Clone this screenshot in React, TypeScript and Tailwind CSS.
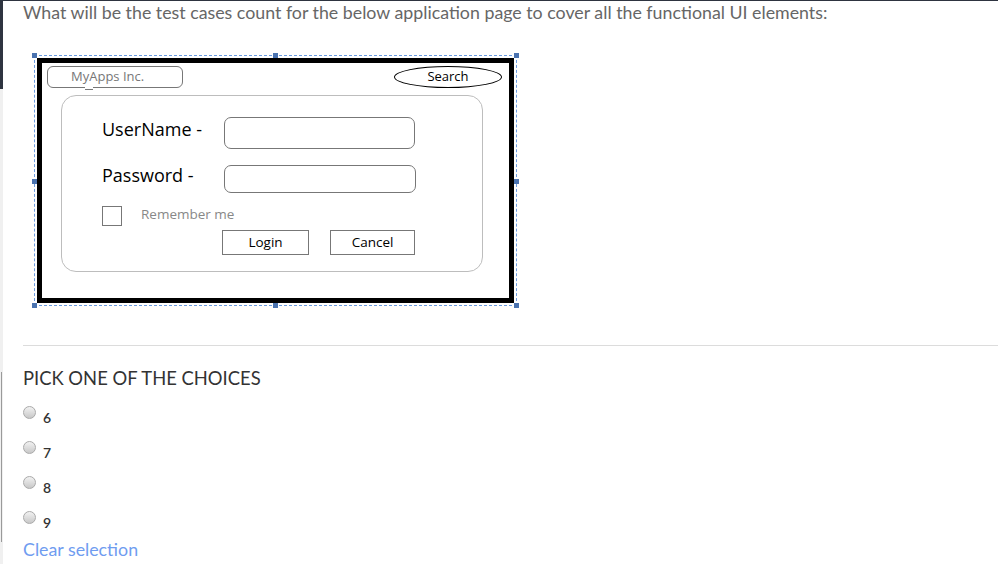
import React from 'react';

const lato = { fontFamily: 'Lato, "Open Sans", sans-serif' };
const mock = { fontFamily: '"Open Sans", "Noto Sans", sans-serif' };

function Handle({ className }: { className: string }) {
  return <span className={`absolute h-[5px] w-[5px] bg-[#4a73b0] ${className}`} />;
}

function Radio({ label }: { label: string }) {
  return (
    <label className="flex h-[35px] items-start gap-[7px]">
      <span className="mt-[-5px] h-[13px] w-[13px] rounded-full border border-[#aaa] bg-gradient-to-b from-[#f2f2f2] to-[#c8c8c8]" />
      <span className="text-[14px] font-semibold leading-[14px] text-[#333]">{label}</span>
    </label>
  );
}

function Mockup() {
  return (
    <div className="relative ml-[11px] mt-[33px] h-[251px] w-[483px] border border-dashed border-[#6a9be0] p-[2px]" style={mock}>
      <Handle className="left-[-3px] top-[-3px]" />
      <Handle className="left-[238px] top-[-3px]" />
      <Handle className="right-[-3px] top-[-3px]" />
      <Handle className="left-[-3px] top-[123px]" />
      <Handle className="right-[-3px] top-[123px]" />
      <Handle className="bottom-[-3px] left-[-3px]" />
      <Handle className="bottom-[-3px] left-[238px]" />
      <Handle className="bottom-[-3px] right-[-3px]" />

      <div className="h-full w-full border-[5px] border-black bg-white">
        <div className="mt-[3px] flex items-center justify-between pl-[5px] pr-[7px]">
          <div className="relative flex h-[22px] w-[136px] items-center rounded-[6px] border border-[#777] pl-[23px] text-[13px] text-[#777]">
            MyApps Inc.
            <span className="absolute bottom-[-3px] left-[37px] h-[5px] w-[8px] border-b border-[#777] bg-white" />
          </div>
          <div className="flex h-[22px] w-[108px] items-center justify-center rounded-[50%] border border-black text-[13px] text-black">
            Search
          </div>
        </div>

        <div className="ml-[19px] mt-[7px] h-[177px] w-[422px] rounded-[15px] border border-[#bdbdbd] pl-[40px]">
          <div className="mt-[21px] flex items-center">
            <span className="mt-[-7px] w-[122px] text-[18px] text-black">UserName -</span>
            <span className="h-[32px] w-[191px] rounded-[7px] border border-[#777]" />
          </div>
          <div className="mt-[16px] flex items-center">
            <span className="mt-[-7px] w-[122px] text-[18px] text-black">Password -</span>
            <span className="h-[28px] w-[192px] rounded-[7px] border border-[#777]" />
          </div>
          <div className="mt-[13px] flex items-center">
            <span className="h-[20px] w-[20px] border border-[#777]" />
            <span className="ml-[19px] mt-[-4px] text-[13.5px] text-[#888]">Remember me</span>
          </div>
          <div className="mt-[4px] flex gap-[21px] pl-[120px]">
            <button className="flex h-[25px] w-[87px] items-center justify-center border border-[#777] text-[13.5px] text-black">
              Login
            </button>
            <button className="flex h-[25px] w-[85px] items-center justify-center border border-[#777] text-[13.5px] text-black">
              Cancel
            </button>
          </div>
        </div>
      </div>
    </div>
  );
}

export default function App() {
  return (
    <div className="flex h-[564px] w-[998px] overflow-hidden border-t border-[#2e3440] bg-white" style={lato}>
      <div className="flex w-[3px] flex-col bg-[#f0f0f0]">
        <div className="h-[88px] bg-[#2e3440]" />
        <div className="ml-[1px] mt-[283px] h-[170px] w-[1px] bg-[#9a9a9a]" />
      </div>

      <div className="flex flex-1 flex-col pl-[20px]">
        <p className="pt-[1px] text-[17.8px] leading-[20px] text-[#666]">
          What will be the test cases count for the below application page to cover all the functional UI elements:
        </p>

        <Mockup />

        <div className="mt-[39px] h-px bg-[#dcdcdc]" />

        <h2 className="mt-[21px] text-[18.4px] leading-[22px] text-[#333]">PICK ONE OF THE CHOICES</h2>

        <div className="mt-[22px] flex flex-col">
          <Radio label="6" />
          <Radio label="7" />
          <Radio label="8" />
          <Radio label="9" />
        </div>

        <a className="mt-[-12px] text-[17.8px] leading-[20px] text-[#6f9cf0]">Clear selection</a>
      </div>
    </div>
  );
}
